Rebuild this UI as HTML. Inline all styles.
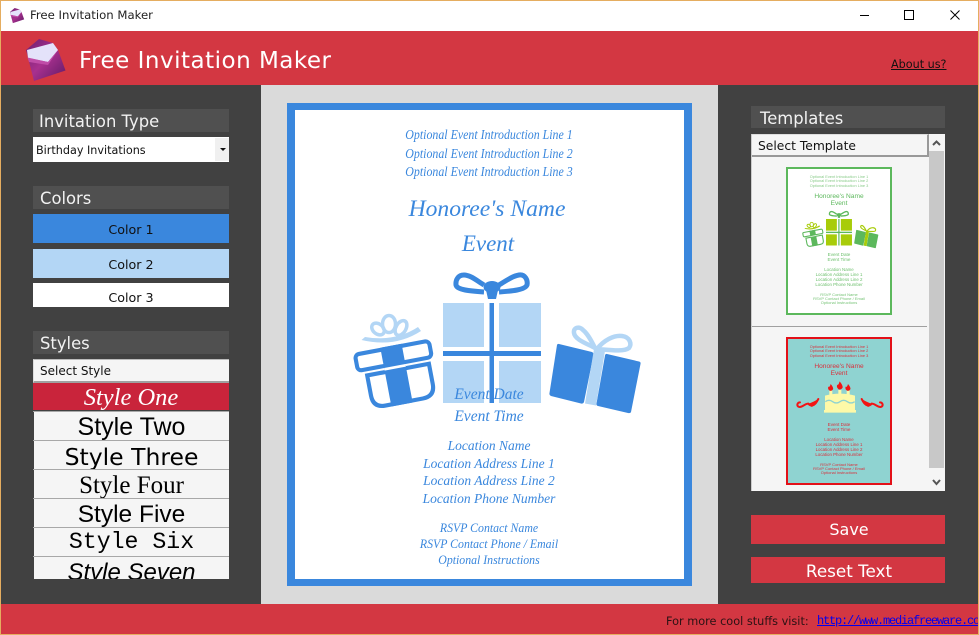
<!DOCTYPE html>
<html><head><meta charset="utf-8"><title>Free Invitation Maker</title>
<style>
html,body{margin:0;padding:0;background:#414141}
#p{position:relative;width:979px;height:635px;overflow:hidden;background:#414141;font-family:"DejaVu Sans",sans-serif}
#p div,#p a{position:absolute;white-space:nowrap}
.b{box-sizing:border-box}
.h{box-sizing:border-box;background:#505050;color:#f2f2f2;font-size:16.4px;line-height:25px;height:23px;left:33px;width:196px;padding-left:7px;overflow:hidden}
.c{left:33px;width:196px;text-align:center;font-size:12.7px;color:#111;overflow:hidden}
.s{left:34px;width:195px;background:#f5f5f5;text-align:center;color:#000;overflow:hidden;height:28px;line-height:28px;font-size:25px}
.l{left:33px;width:196px;height:1px;background:#a8a8a8}
.t{left:295px;width:388px;text-align:center;color:#3a87dd;font-family:"Liberation Serif",serif;font-style:italic;font-size:14px;line-height:18px}
.btn{left:751px;width:194px;box-sizing:border-box;background:#d33742;color:#fff;text-align:center;font-size:16px}
.m{left:0;width:106px;text-align:center;font-family:"Liberation Sans",sans-serif;font-size:3.9px;line-height:4.6px}
svg{position:absolute;left:0;top:0}
</style></head><body>
<div id="p">
<div style="left:0;top:0;width:979px;height:31px;background:#fff"></div>
<div style="left:30px;top:7px;font-size:11.7px;line-height:17px;color:#222">Free Invitation Maker</div>
<div style="left:0;top:31px;width:979px;height:54px;background:#d33742"></div>
<div style="left:79px;top:44px;font-size:23px;line-height:34px;color:#fff;letter-spacing:.5px">Free Invitation Maker</div>
<a style="left:891px;top:57px;font-size:11.2px;line-height:16px;color:#111;text-decoration:underline">About us?</a>

<div style="left:261px;top:85px;width:457px;height:519px;background:#dadada"></div>
<div style="left:0;top:604px;width:979px;height:30px;background:#d33742"></div>
<div style="left:666px;top:613px;font-size:11.3px;line-height:17px;color:#2a1214">For more cool stuffs visit:</div>
<a style="left:817px;top:613px;font-family:'Liberation Mono',monospace;font-size:12px;letter-spacing:-1.2px;line-height:16px;color:#0000ee;text-decoration:underline">http://www.mediafreeware.co</a>

<!-- left column -->
<div class="h" style="top:109px;padding-left:6px">Invitation Type</div>
<div style="left:33px;top:137px;width:196px;height:25px;background:#fff"></div>
<div style="left:36px;top:143px;font-size:11.2px;line-height:16px;color:#111">Birthday Invitations</div>
<div style="left:215px;top:138px;width:14px;height:23px;background:#f0f0f0"></div>
<div style="left:220px;top:148px;width:0;height:0;border-left:3px solid transparent;border-right:3px solid transparent;border-top:3px solid #111"></div>

<div class="h" style="top:186px">Colors</div>
<div class="c" style="top:214px;height:29px;line-height:31px;background:#3a87dd">Color 1</div>
<div class="c" style="top:249px;height:29px;line-height:31px;background:#b3d6f5">Color 2</div>
<div class="c" style="top:283px;height:24px;line-height:30px;background:#fff">Color 3</div>

<div class="h" style="top:331px">Styles</div>
<div style="left:33px;top:359px;width:196px;height:24px;background:#f5f5f5;border-top:1px solid #bbb;border-bottom:2px solid #a0a0a0;box-sizing:border-box;border-left:1px solid #ddd"></div>
<div style="left:40px;top:363px;font-size:12px;line-height:16px;color:#111">Select Style</div>
<div class="s" style="left:33px;width:196px;top:383px;height:27px;line-height:29px;background:#c9243b;color:#fff;font-family:'Liberation Serif',serif;font-style:italic;font-size:24.5px">Style One</div>
<div class="s" style="top:412px;font-family:'Liberation Sans',sans-serif;font-size:25px;line-height:31px">Style Two</div>
<div class="s" style="top:441px;font-family:'DejaVu Sans',sans-serif;font-size:23.5px;line-height:32px">Style Three</div>
<div class="s" style="top:470px;font-family:'Liberation Serif',serif;font-size:25px;line-height:32px">Style Four</div>
<div class="s" style="top:499px;font-family:'Liberation Sans',sans-serif;font-size:24.5px;line-height:32px">Style Five</div>
<div class="s" style="top:528px;font-family:'Liberation Mono',monospace;font-size:23.2px;line-height:28px">Style Six</div>
<div class="s" style="top:557px;height:22px;font-family:'Liberation Sans',sans-serif;font-style:italic;font-size:24px;line-height:31px">Style Seven</div>
<div class="l" style="top:411px"></div><div class="l" style="top:440px"></div><div class="l" style="top:469px"></div><div class="l" style="top:498px"></div><div class="l" style="top:527px"></div><div class="l" style="top:556px"></div>

<!-- invitation -->
<div class="b" style="left:287px;top:103px;width:405px;height:483px;background:#fff;border:solid #3a87dd;border-width:7px 8px"></div>

<!-- right column -->
<div style="left:751px;top:106px;width:194px;height:22px;background:#505050;color:#f2f2f2;font-size:16.4px;line-height:25px;overflow:hidden"><span style="margin-left:9px">Templates</span></div>
<div style="left:751px;top:134px;width:194px;height:357px;background:#f5f5f5"></div>
<div class="b" style="left:751px;top:134px;width:178px;height:23px;background:#f5f5f5;border:1px solid #ddd;border-right:2px solid #999;border-bottom:2px solid #999"></div>
<div style="left:758px;top:138px;font-size:12.3px;line-height:17px;color:#111">Select Template</div>
<div style="left:929px;top:151px;width:15px;height:317px;background:#c8c8c8"></div>
<div style="left:751px;top:326px;width:176px;height:1px;background:#a0a0a0"></div>
<div style="left:751px;top:134px;width:1px;height:357px;background:#ccc"></div>

<div class="b" style="left:786px;top:167px;width:106px;height:148px;background:#fff;border:2px solid #5cb85c;color:#5cb85c">
 <div class="m" style="left:-2px;top:5.5px;opacity:.75">Optional Event Introduction Line 1<br>Optional Event Introduction Line 2<br>Optional Event Introduction Line 3</div>
 <div class="m" style="left:-2px;top:24px;font-size:6.6px;line-height:7px">Honoree's Name<br>Event</div>
 <div class="m" style="left:-2px;top:83.500px;font-size:4.6px;opacity:.9">Event Date</div><div class="m" style="left:-2px;top:89px;font-size:4.6px;opacity:.9">Event Time</div>
 <div class="m" style="left:-2px;top:98px;font-size:4.4px;line-height:5.1px;opacity:.9">Location Name<br>Location Address Line 1<br>Location Address Line 2<br>Location Phone Number</div>
 <div class="m" style="left:-2px;top:124px;font-size:4px;line-height:4.2px;opacity:.85">RSVP Contact Name<br>RSVP Contact Phone / Email<br>Optional Instructions</div>
</div>
<div class="b" style="left:786px;top:337px;width:106px;height:148px;background:#8fd3d1;border:2px solid #e31018;color:#d8303c">
 <div class="m" style="left:-2px;top:5.5px">Optional Event Introduction Line 1<br>Optional Event Introduction Line 2<br>Optional Event Introduction Line 3</div>
 <div class="m" style="left:-2px;top:24px;font-size:6.6px;line-height:7px">Honoree's Name<br>Event</div>
 <div class="m" style="left:-2px;top:83.500px;font-size:4.6px">Event Date</div><div class="m" style="left:-2px;top:89px;font-size:4.6px">Event Time</div>
 <div class="m" style="left:-2px;top:98px;font-size:4.4px;line-height:5.1px">Location Name<br>Location Address Line 1<br>Location Address Line 2<br>Location Phone Number</div>
 <div class="m" style="left:-2px;top:124px;font-size:4px;line-height:4.2px">RSVP Contact Name<br>RSVP Contact Phone / Email<br>Optional Instructions</div>
</div>

<div class="btn" style="top:515px;height:29px;line-height:29px;padding-left:2px">Save</div>
<div class="btn" style="top:557px;height:26px;line-height:29px;font-size:16.800px;padding-left:2px">Reset Text</div>

<!-- graphics -->
<svg width="979" height="635" viewBox="0 0 979 635" fill="none">
<defs>
 <linearGradient id="eg" x1="0" y1="0" x2="1" y2="1"><stop offset="0" stop-color="#6d1f70"/><stop offset=".5" stop-color="#a8308e"/><stop offset="1" stop-color="#5e1a66"/></linearGradient>
 <g id="gifts">
  <g fill="var(--b)">
   <rect x="443" y="303" width="41" height="44"/><rect x="499" y="303" width="42" height="44"/>
   <rect x="443" y="361" width="41" height="42"/><rect x="499" y="361" width="42" height="42"/>
  </g>
  <g fill="var(--a)">
   <rect x="489.500" y="303" width="4.500" height="100"/><rect x="443" y="351" width="98" height="5"/>
   <ellipse cx="492" cy="287" rx="8.500" ry="6"/>
   <path d="M486 290H498L496 299H488Z"/>
  </g>
  <path d="M484 285C476 280 470 275 464 275C458 275 455.500 280 456 285C457 290 470 291 484 292M499 285C507 280 513 276 519 275C525 274 528 280 527 285C525 290 512 291 499 292" stroke="var(--a)" stroke-width="5" stroke-linejoin="round"/>
  <g transform="translate(-1 0) rotate(-10.700 395 362) translate(395 362) scale(1.03) translate(-395 -362)">
   <rect x="359" y="348" width="73" height="16" rx="4" stroke="var(--a)" stroke-width="4"/>
   <path d="M367 370H428V390Q428 402 416 402H379Q367 402 367 390Z" stroke="var(--a)" stroke-width="4"/>
   <rect x="384.500" y="346" width="21" height="58" fill="var(--a)"/>
   <rect x="384.500" y="366" width="21" height="2.500" fill="#fff"/>
  </g>
  <g stroke="var(--b)" stroke-width="3.500">
   <ellipse cx="378" cy="329" rx="7" ry="5" transform="rotate(40 378 329)"/>
   <ellipse cx="389" cy="324" rx="6.500" ry="8.500"/>
   <ellipse cx="401" cy="328" rx="5" ry="8" transform="rotate(30 401 328)"/>
  </g>
  <path d="M361.500 340L365 337Q395 342 418 327L421 331Q395 348 361.500 340Z" fill="var(--b)"/>
  <g fill="var(--a)">
   <path d="M559 344L592 352Q594 353 593.500 355L584 402Q583 404 581 403.500L551 396Q549 395 549.500 393L557 345Q557.500 343.500 559 344Z"/>
   <path d="M607 354L639 361.500Q641 362 640.500 364L631 412Q630.500 413.500 628 413L598 406Q596 405.500 596.500 403.500L605 355.500Q605.500 353.500 607 354Z"/>
  </g>
  <path d="M594 349L605 351L596 405.500L585 403.500Z" fill="var(--b)"/>
  <path d="M595 348C588 344 575 340 574 333C573 327 580 326 583 330C588 334 592 342 595 348ZM597 349C604 340 614 335 622 336C630 337 632 344 629 348C624 352 610 350 597 349Z" stroke="var(--b)" stroke-width="4.500" stroke-linejoin="round"/>
 </g>
 <g id="env">
  <path d="M39 39L53 43L58 50L65.500 70.500L34 81L26 50Z" fill="url(#eg)"/>
  <path d="M27 50L53 43L58 50L48 62L28 58Z" fill="#e4e2fa"/>
  <path d="M27.500 57.500L48 62L58 50L48 65L29 62Z" fill="#c04ca8"/>
 </g>
</defs>
<g style="--a:#3a87dd;--b:#b3d6f5"><use href="#gifts"/></g>
<g style="--a:#5cb85c;--b:#a8cc0a" transform="translate(708.600 138.700) scale(.265)"><use href="#gifts"/></g>
<use href="#env"/>
<g transform="translate(.6 -6) scale(.36)"><use href="#env"/></g>

<!-- cake -->
<g transform="translate(745 325) scale(.3333)">
 <path d="M240 212Q285 200 330 212V255H333V263H237V255H240Z" fill="#fdf9a8"/>
 <path d="M241 230Q252 222 263 230T285 230T307 230T329 230" stroke="#8fd3d1" stroke-width="4"/>
 <g fill="#fdf9a8"><rect x="253" y="197" width="9" height="15"/><rect x="280" y="195" width="9" height="15"/><rect x="305" y="197" width="9" height="15"/></g>
 <g fill="#f21414">
  <path d="M257 177Q266 187 264 193Q260 199 254 197Q247 192 250 185Q254 188 257 177Z"/>
  <path d="M284 169Q294 181 293 188Q289 195 281 193Q273 187 277 179Q280 182 284 169Z"/>
  <path d="M309 177Q318 187 316 193Q312 199 306 197Q299 192 302 185Q306 188 309 177Z"/>
 </g>
 <g stroke="#f21414" stroke-width="6" stroke-linecap="round">
  <path d="M165 232C158 232 154 240 160 245C170 250 178 236 190 236C196 244 208 246 220 222"/>
  <path d="M405 232C412 232 416 240 410 245C400 250 392 236 380 236C374 244 362 246 350 222"/>
 </g>
 <g fill="#f21414"><path d="M190 236Q205 232 221 221Q218 240 200 246Z"/><path d="M380 236Q365 232 349 221Q352 240 370 246Z"/></g>
</g>

<!-- window controls -->
<path d="M860 15.500H869" stroke="#000" stroke-width="1"/>
<rect x="904.500" y="10.500" width="9" height="9" stroke="#000"/>
<path d="M950.500 10.500L959.500 19.500M959.500 10.500L950.500 19.500" stroke="#000"/>
<!-- scrollbar arrows -->
<path d="M933 145L936.500 141.500L940 145" stroke="#555" stroke-width="2"/>
<path d="M933 480L936.500 484L940 480" stroke="#555" stroke-width="2"/>
<!-- window border -->
<rect x=".5" y=".5" width="978" height="634" stroke="#e5ad60"/>
</svg>

<!-- invitation text -->
<div class="t" style="top:126px;font-size:13.600px;transform:scaleX(.875)">Optional Event Introduction Line 1</div>
<div class="t" style="top:145px;font-size:13.600px;transform:scaleX(.875)">Optional Event Introduction Line 2</div>
<div class="t" style="top:163px;font-size:13.600px;transform:scaleX(.875)">Optional Event Introduction Line 3</div>
<div class="t" style="top:195px;font-size:23.600px;line-height:28px;left:293px">Honoree's Name</div>
<div class="t" style="top:230px;font-size:23px;line-height:28px;left:294px">Event</div>
<div class="t" style="top:386px;font-size:15.500px">Event Date</div>
<div class="t" style="top:408px;font-size:15.500px">Event Time</div>
<div class="t" style="top:437px;font-size:13.500px">Location Name</div>
<div class="t" style="top:455px;font-size:13.500px">Location Address Line 1</div>
<div class="t" style="top:472px;font-size:13.500px">Location Address Line 2</div>
<div class="t" style="top:490px;font-size:13.500px">Location Phone Number</div>
<div class="t" style="top:519px;font-size:12.500px;transform:scaleX(.945)">RSVP Contact Name</div>
<div class="t" style="top:535px;font-size:12.500px;transform:scaleX(.945)">RSVP Contact Phone / Email</div>
<div class="t" style="top:551px;font-size:12.500px;transform:scaleX(.945)">Optional Instructions</div>
</div>
</body></html>
